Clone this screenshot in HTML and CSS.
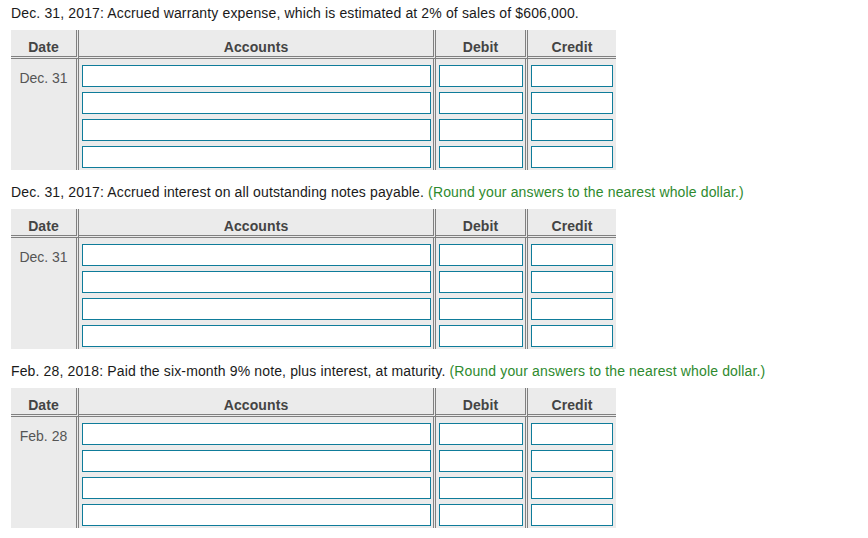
FILE: index.html
```html
<!DOCTYPE html>
<html>
<head>
<meta charset="utf-8">
<link rel="stylesheet" href="styles.css">
</head>
<body>
<div class="page">
  <section class="entry">
    <p class="title">Dec. 31, 2017: Accrued warranty expense, which is estimated at 2% of sales of $606,000.</p>
    <div class="jtable">
      <div class="hcell">Date</div>
      <div class="hcell">Accounts</div>
      <div class="hcell">Debit</div>
      <div class="hcell last">Credit</div>
      <div class="bcell date">Dec. 31</div>
      <div class="bcell acct"><input class="fld"><input class="fld"><input class="fld"><input class="fld"></div>
      <div class="bcell debit"><input class="fld"><input class="fld"><input class="fld"><input class="fld"></div>
      <div class="bcell credit last"><input class="fld"><input class="fld"><input class="fld"><input class="fld"></div>
    </div>
  </section>
  <section class="entry">
    <p class="title">Dec. 31, 2017: Accrued interest on all outstanding notes payable. <span class="hint">(Round your answers to the nearest whole dollar.)</span></p>
    <div class="jtable">
      <div class="hcell">Date</div>
      <div class="hcell">Accounts</div>
      <div class="hcell">Debit</div>
      <div class="hcell last">Credit</div>
      <div class="bcell date">Dec. 31</div>
      <div class="bcell acct"><input class="fld"><input class="fld"><input class="fld"><input class="fld"></div>
      <div class="bcell debit"><input class="fld"><input class="fld"><input class="fld"><input class="fld"></div>
      <div class="bcell credit last"><input class="fld"><input class="fld"><input class="fld"><input class="fld"></div>
    </div>
  </section>
  <section class="entry">
    <p class="title">Feb. 28, 2018: Paid the six-month 9% note, plus interest, at maturity. <span class="hint">(Round your answers to the nearest whole dollar.)</span></p>
    <div class="jtable">
      <div class="hcell">Date</div>
      <div class="hcell">Accounts</div>
      <div class="hcell">Debit</div>
      <div class="hcell last">Credit</div>
      <div class="bcell date">Feb. 28</div>
      <div class="bcell acct"><input class="fld"><input class="fld"><input class="fld"><input class="fld"></div>
      <div class="bcell debit"><input class="fld"><input class="fld"><input class="fld"><input class="fld"></div>
      <div class="bcell credit last"><input class="fld"><input class="fld"><input class="fld"><input class="fld"></div>
    </div>
  </section>
</div>
</body>
</html>
```

FILE: styles.css
```css
* { box-sizing: border-box; }
html, body { margin: 0; padding: 0; background: #fff; }
body { font-family: "Liberation Sans", Arial, sans-serif; font-size: 14px; line-height: 16px; color: #222; }
.page { padding: 5px 11px 0 11px; display: flex; flex-direction: column; gap: 14px; }
.entry { display: flex; flex-direction: column; gap: 9px; }
.title { margin: 0; white-space: nowrap; color: #1a1a1a; letter-spacing: 0.14px; }
.hint { color: #2e8a2e; }
.jtable {
  display: grid;
  grid-template-columns: 68px 357px 92px 88px;
  width: 605px;
  background: #ebebeb;
}
.hcell {
  height: 29px;
  padding-top: 9px;
  text-align: center;
  font-weight: bold;
  color: #444;
  letter-spacing: 0.1px;
  border-right: 3px double #808080;
  border-bottom: 3px double #808080;
}
.hcell.last, .bcell.last { border-right: none; }
.bcell {
  border-right: 3px double #808080;
  padding: 6px 2px 2px 3px;
  display: flex;
  flex-direction: column;
  gap: 5px;
}
.bcell.credit { padding-right: 3px; }
.bcell.date {
  padding: 11px 0 0 0;
  text-align: center;
  color: #555;
  display: block;
}
.fld {
  display: block;
  width: 100%;
  height: 22px;
  margin: 0;
  padding: 0 4px;
  border: 1px solid #0f7c9a;
  border-radius: 0;
  background: #fff;
  font-family: "Liberation Sans", Arial, sans-serif;
  font-size: 14px;
  outline: none;
}
```
